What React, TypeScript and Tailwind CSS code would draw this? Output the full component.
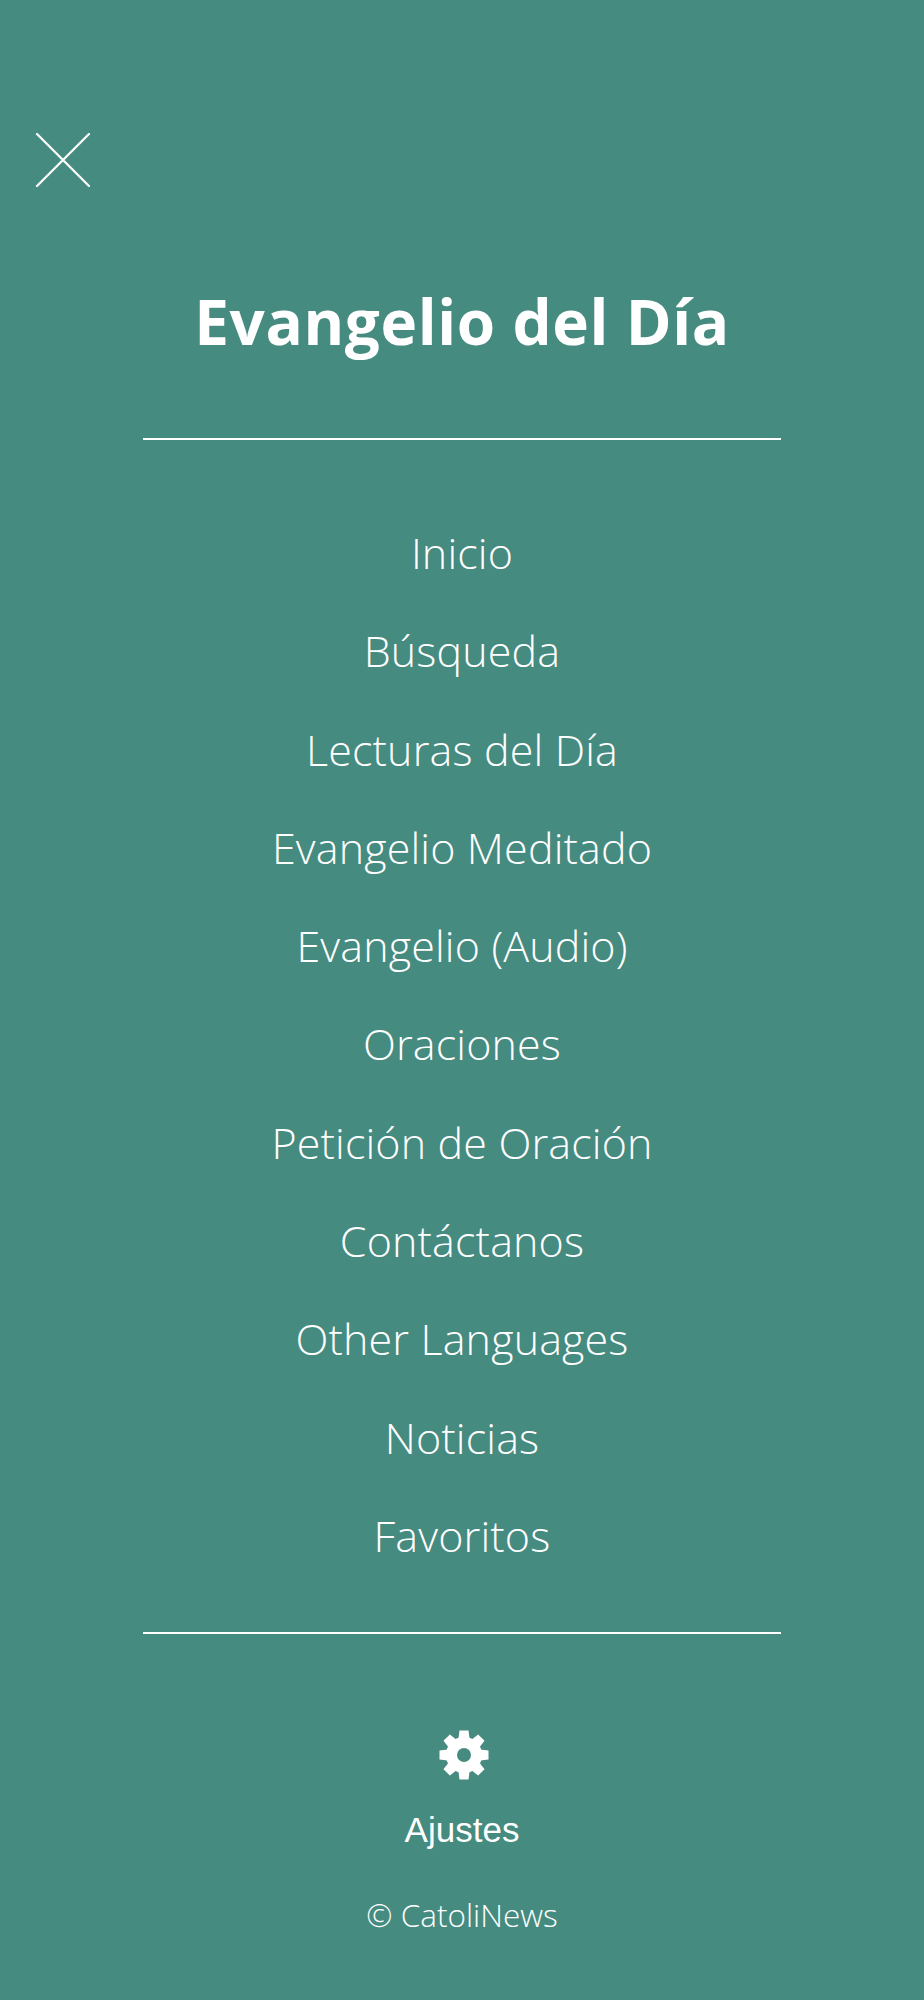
import React from 'react';

const links = [
  'Inicio',
  'Búsqueda',
  'Lecturas del Día',
  'Evangelio Meditado',
  'Evangelio (Audio)',
  'Oraciones',
  'Petición de Oración',
  'Contáctanos',
  'Other Languages',
  'Noticias',
  'Favoritos',
];

function Gear() {
  return (
    <svg className="ml-[4px]" width="50" height="50" viewBox="0 0 50 50" fill="#fff">
      {[0, 45, 90, 135, 180, 225, 270, 315].map((a) => (
        <path key={a} d="M20.5 0.5h9l1 8h-11z" transform={`rotate(${a} 25 25)`} />
      ))}
      <circle cx="25" cy="25" r="12.5" fill="none" stroke="#fff" strokeWidth="11" />
    </svg>
  );
}

export default function App() {
  return (
    <div className="min-h-[2000px] bg-[#468b7f] text-white font-['Open_Sans',sans-serif]">
      <div className="pt-[133px] pl-[35px]">
        <svg width="56" height="54" viewBox="0 0 56 54" stroke="#fff" strokeWidth="2.2" strokeLinecap="round">
          <path d="M2 1L54 53M54 1L2 53" />
        </svg>
      </div>
      <h1 className="mt-[94px] text-center text-[62px] leading-[80px] font-bold tracking-[0.6px]">Evangelio del Día</h1>
      <div className="mx-auto mt-[77px] h-[2px] w-[638px] bg-white" />
      <nav className="mt-[83px] flex flex-col items-center gap-[38.3px]">
        {links.map((l) => (
          <a key={l} className="text-[43px] leading-[60px] font-light tracking-[0.15px]">{l}</a>
        ))}
      </nav>
      <div className="mx-auto mt-[66px] h-[2px] w-[638px] bg-white" />
      <div className="mt-[96px] flex flex-col items-center">
        <Gear />
        <p className="mt-[30px] text-[35px] leading-[40px] font-['Liberation_Sans',sans-serif]">Ajustes</p>
        <p className="mt-[45px] text-[31.5px] leading-[40px] font-light">© CatoliNews</p>
      </div>
    </div>
  );
}
